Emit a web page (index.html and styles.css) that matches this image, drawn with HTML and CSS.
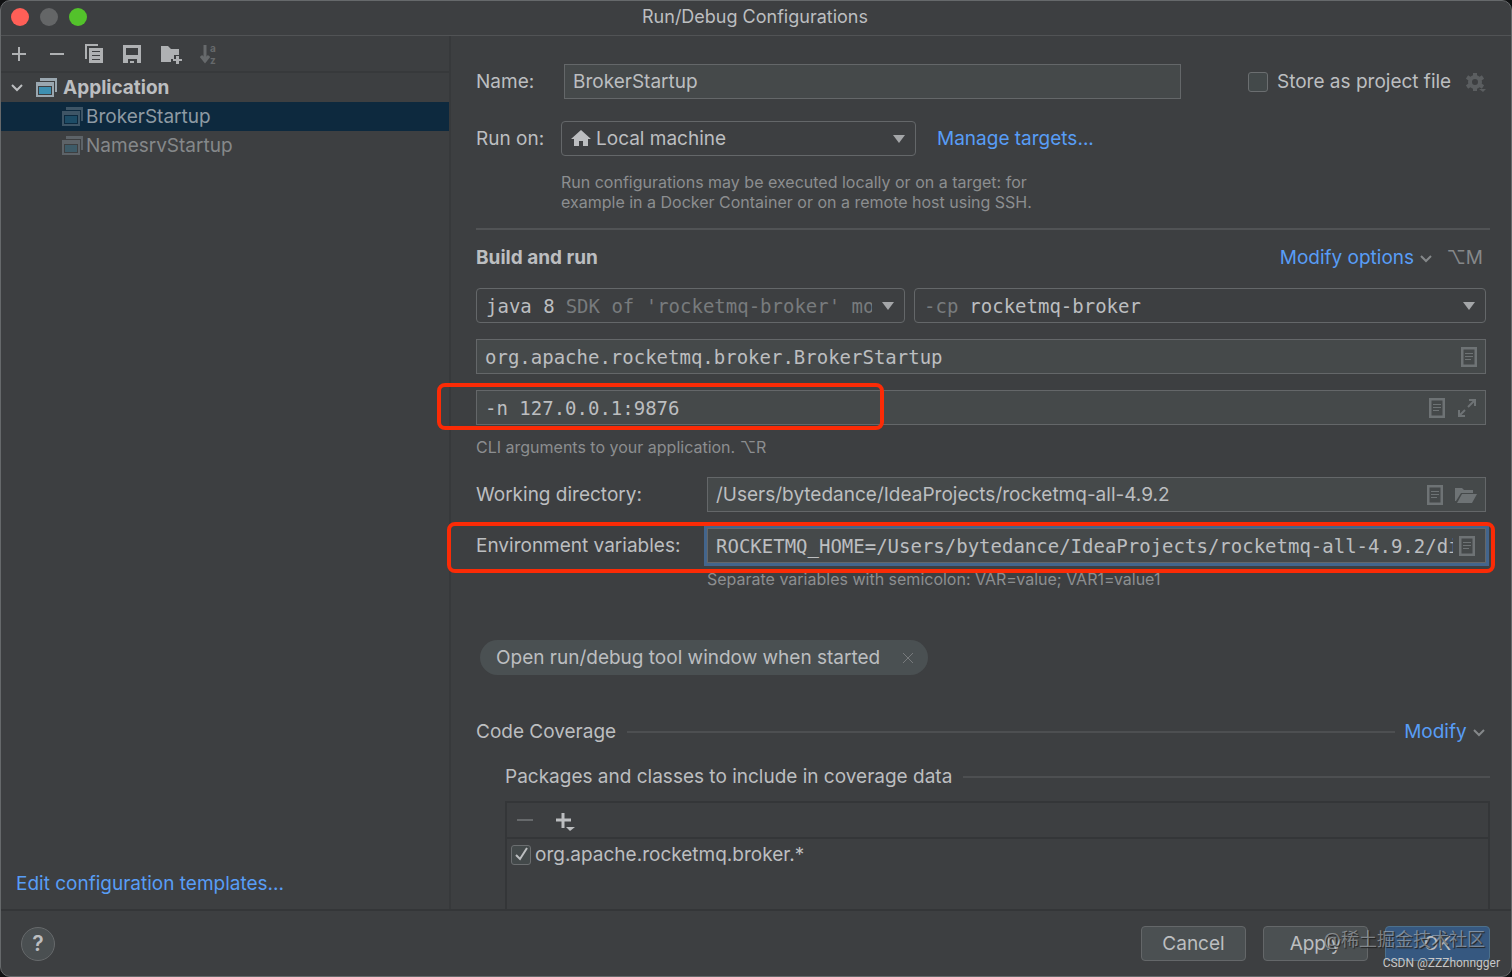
FILE: index.html
```html
<!DOCTYPE html>
<html lang="en">
  <head>
    <meta charset="UTF-8" />
    <meta name="viewport" content="width=device-width, initial-scale=1.0" />
    <title>Run/Debug Configurations</title>
    <link rel="stylesheet" href="styles.css">
  </head>
  <body>
    <!-- Shared icons -->
    <svg class="sprite" width="0" height="0">
      <symbol id="app" viewBox="0 0 22 20">
        <path class="frame" d="M4 0h17v14h-2V3H4z" />
        <path class="frame" fill-rule="evenodd" d="M0 4h18v15H0zM2 8v9h14V8z" />
        <path class="pane" d="M3 9h12v7H3z" />
      </symbol>
      <symbol id="doc" viewBox="0 0 16 20">
        <path d="M1 1h14v18H1z" fill="none" stroke="currentColor" stroke-width="3" />
        <path d="M4 6.500h8M4 9.500h8M4 12.500h6" stroke="currentColor" />
      </symbol>
      <symbol id="chevron" viewBox="0 0 14 10">
        <path d="M2 2l5 5 5-5" fill="none" stroke="currentColor" stroke-width="2" />
      </symbol>
      <symbol id="arrow" viewBox="0 0 14 8">
        <path d="M1 0h12L7 8z" fill="currentColor" />
      </symbol>
    </svg>

    <div id="window">
      <header class="titlebar">
        <div class="lights"><i class="close"></i><i class="min"></i><i class="max"></i></div>
        <h1>Run/Debug Configurations</h1>
      </header>

      <div class="content">
        <aside class="sidebar">
          <div class="toolbar">
            <button type="button" aria-label="Add">
              <svg width="20" height="20"><path d="M11 3v14M4 10h14" stroke="currentColor" stroke-width="2" /></svg>
            </button>
            <button type="button" aria-label="Remove">
              <svg width="20" height="20"><path d="M4 10h14" stroke="currentColor" stroke-width="2" /></svg>
            </button>
            <button type="button" aria-label="Copy">
              <svg width="20" height="20" fill="currentColor">
                <path d="M1 0h13v2H3v13H1z" />
                <path fill-rule="evenodd" d="M5 4h14v15H5zM8 7v1h8V7zM8 11v1h8v-1zM8 15v1h8v-1z" />
              </svg>
            </button>
            <button type="button" aria-label="Save">
              <svg width="20" height="20" fill="currentColor">
                <path fill-rule="evenodd" d="M1 1h18v18h-4v-4H6v4H1zM4 4v7h12V4z" />
                <path d="M8 17h4v2H8z" />
              </svg>
            </button>
            <button type="button" aria-label="New folder">
              <svg width="22" height="20" fill="currentColor">
                <path d="M1 2h7l3 3h8v6h-5v4h-3v3H1z" />
                <path d="M16 12h3v3h3v2h-3v3h-3v-3h-3v-2h3z" />
              </svg>
            </button>
            <button type="button" class="off sort" aria-label="Sort">
              <svg width="10" height="20"><path d="M5 1v14M1 12l4 5 4-5" fill="none" stroke="currentColor" stroke-width="3" /></svg>
              <span class="letters"><span>a</span><span>z</span></span>
            </button>
          </div>

          <ul class="tree">
            <li class="group">
              <svg class="toggle" width="14" height="10"><use href="#chevron" /></svg>
              <svg class="app" width="22" height="20"><use href="#app" /></svg>
              Application
            </li>
            <li class="leaf selected"><svg class="app" width="22" height="20"><use href="#app" /></svg>BrokerStartup</li>
            <li class="leaf"><svg class="app" width="22" height="20"><use href="#app" /></svg>NamesrvStartup</li>
          </ul>

          <a href="#" class="templates">Edit configuration templates...</a>
        </aside>

        <main>
          <div class="row name-row">
            <label class="short" for="name">Name:</label>
            <input class="field" type="text" id="name" value="BrokerStartup" />
            <label class="store"><input type="checkbox" class="check" /> Store as project file</label>
            <svg class="gear" width="20" height="20" viewBox="0 0 20 20">
              <circle cx="9" cy="10" r="5" fill="none" stroke="currentColor" stroke-width="4" />
              <path d="M9 1v3M9 16v3M1 5l3 2M14 13l3 2M1 15l3-2M14 7l3-2" stroke="currentColor" stroke-width="4" />
              <path d="M13 17h7l-3 3z" fill="currentColor" />
            </svg>
          </div>

          <div class="row target-row">
            <label class="short" for="target">Run on:</label>
            <div class="combo target">
              <svg width="20" height="18"><path d="M10 0l10 9h-3v7h-5v-5H8v5H3V9H0z" fill="currentColor" /></svg>
              <select id="target"><option>Local machine</option></select>
              <svg class="arrow" width="14" height="8"><use href="#arrow" /></svg>
            </div>
            <a href="#">Manage targets...</a>
          </div>
          <p class="hint target-hint">Run configurations may be executed locally or on a target: for<br>example in a Docker Container or on a remote host using SSH.</p>

          <hr>

          <div class="row heading">
            <h2>Build and run</h2>
            <a href="#">Modify options <svg width="14" height="10"><use href="#chevron" /></svg></a>
            <span class="key">⌥M</span>
          </div>

          <div class="row fields combos">
            <div class="combo jdk">
              <label for="jdk">java 8</label>
              <select id="jdk" class="dim"><option>SDK of 'rocketmq-broker' module</option></select>
              <svg class="arrow" width="14" height="8"><use href="#arrow" /></svg>
            </div>
            <div class="combo classpath">
              <label class="dim" for="classpath">-cp</label>
              <select id="classpath"><option>rocketmq-broker</option></select>
              <svg class="arrow" width="14" height="8"><use href="#arrow" /></svg>
            </div>
          </div>

          <div class="fields">
            <div class="field box mono">
              <input type="text" aria-label="Main class" value="org.apache.rocketmq.broker.BrokerStartup" />
              <svg width="16" height="20"><use href="#doc" /></svg>
            </div>
          </div>

          <div class="fields marked">
            <div class="field box mono">
              <input type="text" aria-label="Program arguments" value="-n 127.0.0.1:9876" />
              <svg width="16" height="20"><use href="#doc" /></svg>
              <svg width="20" height="20"><path d="M12 2h6v6M18 2l-7 7M2 12v6h6M2 18l6-6" fill="none" stroke="currentColor" stroke-width="2" /></svg>
            </div>
            <div class="mark mark-args"></div>
          </div>
          <p class="hint args-hint">CLI arguments to your application. ⌥R</p>

          <div class="row fields">
            <label class="long" for="workdir">Working directory:</label>
            <div class="field box">
              <input type="text" id="workdir" value="/Users/bytedance/IdeaProjects/rocketmq-all-4.9.2" />
              <svg width="16" height="20"><use href="#doc" /></svg>
              <svg width="22" height="20" fill="currentColor"><path d="M0 3h7l2 2h9v3H6L1 16H0zM7 9h15l-5 9H2z" /></svg>
            </div>
          </div>

          <div class="row fields marked">
            <label class="long" for="env">Environment variables:</label>
            <div class="field box mono focused">
              <input type="text" id="env" value="ROCKETMQ_HOME=/Users/bytedance/IdeaProjects/rocketmq-all-4.9.2/distribution" />
              <svg width="16" height="20"><use href="#doc" /></svg>
            </div>
            <div class="mark mark-env"></div>
          </div>
          <p class="hint env-hint">Separate variables with semicolon: VAR=value; VAR1=value1</p>

          <div class="chip">
            Open run/debug tool window when started
            <button type="button" aria-label="Remove option">
              <svg width="12" height="12"><path d="M1 1l10 10M11 1L1 11" stroke="currentColor" /></svg>
            </button>
          </div>

          <div class="row section">
            <h3>Code Coverage</h3>
            <span class="rule"></span>
            <a href="#">Modify <svg width="14" height="10"><use href="#chevron" /></svg></a>
          </div>

          <section class="coverage">
            <div class="row">
              <h3>Packages and classes to include in coverage data</h3>
              <span class="rule"></span>
            </div>
            <div class="packages">
              <div class="package-bar">
                <button type="button" class="off" aria-label="Remove package">
                  <svg width="20" height="20"><path d="M2 9h16" stroke="currentColor" stroke-width="2" /></svg>
                </button>
                <button type="button" aria-label="Add package">
                  <svg width="20" height="20"><path d="M8 2v15M1 9h15" stroke="currentColor" stroke-width="3" /><path d="M11 16h9l-5 4z" fill="currentColor" /></svg>
                </button>
              </div>
              <label class="package">
                <input type="checkbox" class="check" checked />
                <svg class="tick" width="20" height="20"><path d="M5 10l4 4 7-11" fill="none" stroke="currentColor" stroke-width="2" /></svg>
                org.apache.rocketmq.broker.*
              </label>
            </div>
          </section>
        </main>
      </div>

      <footer>
        <button type="button" class="help" aria-label="Help">?</button>
        <button type="button" class="btn">Cancel</button>
        <button type="button" class="btn">Apply</button>
        <button type="button" class="btn primary">OK</button>
        <span class="community">@稀土掘金技术社区</span>
        <span class="author">CSDN @ZZZhonngger</span>
      </footer>
    </div>
  </body>
</html>
```
FILE: styles.css
```css
* {
  box-sizing: border-box;
}
body {
  margin: 0;
  background: #101112;
  color: #bcbec0;
  font-family: Inter, "Noto Sans CJK SC", sans-serif;
  font-size: 19px;
  line-height: 24px;
}
h1,
h2,
h3,
p,
ul {
  margin: 0;
  padding: 0;
  font-size: 19px;
  font-weight: 400;
}
button,
input,
select {
  padding: 0;
  border: 0;
  background: none;
  color: inherit;
  font: inherit;
}
a {
  color: #589df6;
  text-decoration: none;
}
svg {
  flex: none;
}
.sprite {
  position: absolute;
}

#window {
  display: flex;
  flex-direction: column;
  min-height: 100vh;
  border: 1px solid #66696b;
  border-radius: 10px;
  background: #3d3f41;
}

/* Title bar */
.titlebar {
  display: flex;
  align-items: center;
  height: 35px;
  padding-bottom: 3px;
  border-bottom: 1px solid #515355;
}
.titlebar h1 {
  flex: 1;
  padding-right: 90px;
  text-align: center;
  font-size: 18px;
}
.lights {
  display: flex;
  gap: 11px;
  width: 88px;
  padding-left: 10px;
}
.lights i {
  width: 18px;
  height: 18px;
  border-radius: 50%;
}
.close {
  background: #ff5f57;
}
.min {
  background: #646667;
}
.max {
  background: #53c22b;
}

.content {
  display: flex;
  flex: 1;
}

/* Configuration tree */
.sidebar {
  display: flex;
  flex-direction: column;
  width: 450px;
  border-right: 2px solid #37393b;
}
.toolbar {
  display: flex;
  align-items: center;
  gap: 18px;
  height: 37px;
  padding-left: 7px;
  border-bottom: 2px solid #37393b;
  color: #afb1b3;
}
.toolbar button {
  display: flex;
}
.off {
  color: #66696b;
}
.letters {
  display: flex;
  flex-direction: column;
  justify-content: center;
  height: 20px;
  font-size: 10px;
  font-weight: 700;
  line-height: 12px;
}
.tree {
  list-style: none;
}
.tree li {
  display: flex;
  align-items: center;
  height: 29px;
}
.group {
  gap: 5px;
  padding-left: 9px;
  font-weight: 700;
}
.toggle {
  margin-right: 7px;
}
.leaf {
  gap: 2px;
  padding-left: 61px;
  color: #85888a;
}
.leaf.selected {
  background: #0d293e;
  color: #8e9aa3;
}
.app {
  fill: #9aa7b0;
}
.pane {
  fill: #3d8fb1;
}
.leaf .app {
  opacity: 0.35;
}
.templates {
  margin: auto 0 13px 15px;
}

/* Form */
main {
  display: flex;
  flex: 1;
  flex-direction: column;
  padding: 28px 21px 0 25px;
}
.row {
  display: flex;
  align-items: center;
}
.short {
  width: 85px;
}
.long {
  width: 231px;
}
.field {
  flex: 1;
  min-width: 0;
  height: 35px;
  padding: 0 8px;
  border: 1px solid #646769;
  background: #45494a;
}
.box {
  display: flex;
  align-items: center;
  gap: 12px;
  color: #6e7375;
}
.box input {
  flex: 1;
  min-width: 0;
  color: #bcbec0;
}
.mono,
.combos {
  font-family: "DejaVu Sans Mono", monospace;
}
.fields {
  margin: 0 4px 16px 0;
}
.store {
  display: flex;
  align-items: center;
  gap: 9px;
  width: 211px;
  margin-left: 67px;
}
.name-row .field {
  margin-left: 3px;
}
.check {
  appearance: none;
  width: 20px;
  height: 20px;
  margin: 0;
  border: 1px solid #6b6e70;
  border-radius: 3px;
  background: #43494a;
}
.gear {
  margin: 0 4px 0 7px;
  color: #5b5e60;
}
.combo {
  display: flex;
  align-items: center;
  height: 35px;
  padding: 0 9px;
  border: 1px solid #646769;
  border-radius: 4px;
}
.combo select {
  flex: 1;
  min-width: 0;
  appearance: none;
}
.combo label {
  margin-right: 11px;
}
.arrow {
  margin-left: 9px;
  color: #a4a6a8;
}
.combo .dim {
  color: #787b7d;
}
.target-row {
  margin-top: 22px;
}
.target {
  gap: 5px;
  width: 355px;
  margin-right: 21px;
}
.hint {
  color: #8c8e90;
  font-size: 16px;
  line-height: 20px;
}
.target-hint {
  margin: 16px 0 16px 85px;
}
hr {
  width: 100%;
  margin: 0;
  border: 0;
  border-top: 2px solid #515355;
}
.heading {
  margin: 16px 7px 18px 0;
}
.heading h2 {
  flex: 1;
  font-weight: 700;
}
.heading svg,
.section svg {
  color: #85888a;
}
.key {
  margin-left: 13px;
  color: #85888a;
}
.combos {
  gap: 9px;
}
.jdk {
  width: 429px;
}
.classpath {
  flex: 1;
}
.marked {
  position: relative;
}
.mark {
  position: absolute;
  border: 4px solid #fb2b06;
  border-radius: 8px;
  pointer-events: none;
}
.mark-args {
  top: -7px;
  bottom: -5px;
  left: -39px;
  width: 447px;
}
.mark-env {
  top: -6px;
  right: -9px;
  bottom: -10px;
  left: -29px;
}
.args-hint {
  margin: -4px 0 20px;
}
.focused {
  gap: 6px;
  padding-right: 10px;
  outline: 3px solid #43658c;
}
.env-hint {
  margin: -10px 0 51px 231px;
}
.chip {
  display: flex;
  align-items: center;
  align-self: flex-start;
  justify-content: space-between;
  gap: 13px;
  min-width: 448px;
  height: 35px;
  margin-left: 4px;
  padding: 0 14px 0 16px;
  border-radius: 18px;
  background: #4a5052;
}
.chip button {
  display: flex;
  color: #777a7c;
}

/* Coverage */
.rule {
  flex: 1;
  height: 2px;
  margin-left: 11px;
  background: #4d4f51;
}
.section {
  margin: 45px 4px 21px 0;
}
.section a {
  margin-left: 9px;
}
.coverage {
  display: flex;
  flex: 1;
  flex-direction: column;
  margin-left: 29px;
}
.packages {
  flex: 1;
  margin-top: 12px;
  border: 2px solid #343638;
  border-bottom: 0;
}
.package-bar {
  display: flex;
  gap: 20px;
  height: 36px;
  padding: 8px;
  border-bottom: 2px solid #343638;
}
.package {
  position: relative;
  display: flex;
  align-items: center;
  gap: 4px;
  padding: 4px;
}
.tick {
  position: absolute;
  left: 4px;
}

/* Buttons */
footer {
  position: relative;
  display: flex;
  align-items: center;
  gap: 17px;
  height: 67px;
  padding: 0 21px 0 20px;
  border-top: 2px solid #343638;
}
.help {
  width: 34px;
  height: 34px;
  margin-right: auto;
  border: 1px solid #66696b;
  border-radius: 50%;
  background: #4a4f51;
  font-size: 21px;
  font-weight: 600;
}
.btn {
  width: 105px;
  height: 35px;
  border: 1px solid #646769;
  border-radius: 4px;
  background: #4b5052;
}
.primary {
  border-color: #4c708c;
  background: #365880;
}
.community {
  position: absolute;
  right: 26px;
  bottom: 24px;
  color: rgba(200, 205, 210, 0.5);
  font-size: 18px;
  text-shadow: 1px 1px 1px #222;
}
.author {
  position: absolute;
  right: 11px;
  bottom: 4px;
  color: #c5c6c7;
  font-family: Roboto, sans-serif;
  font-size: 12px;
  line-height: 18px;
}
```
